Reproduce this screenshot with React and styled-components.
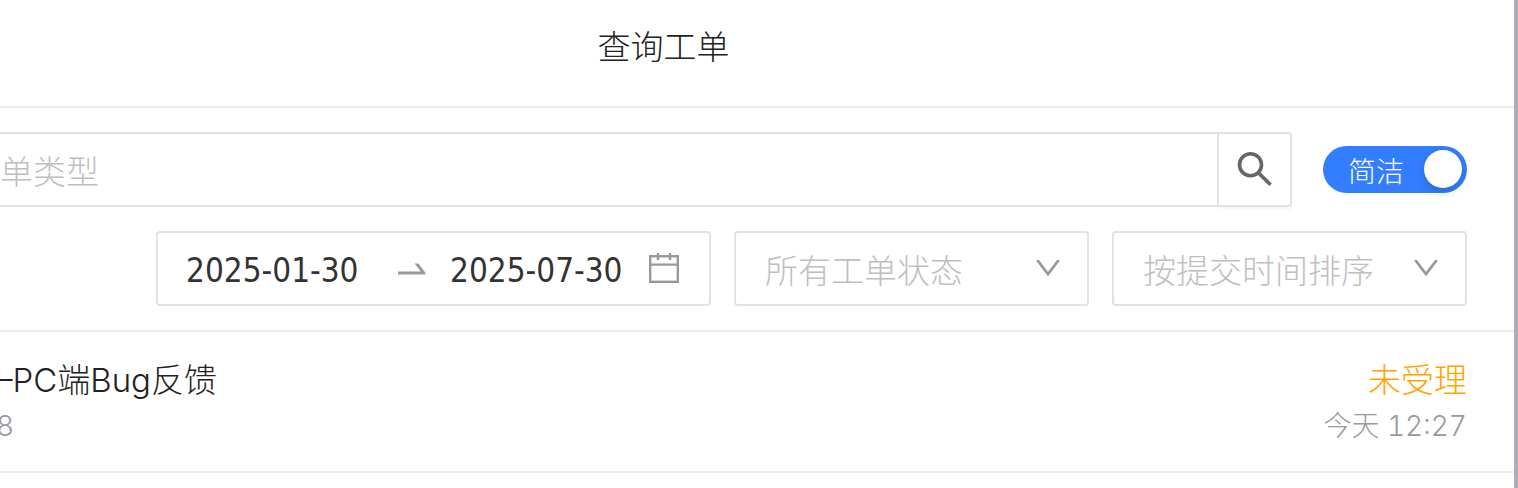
import React, { useState } from 'react';
import styled, { createGlobalStyle } from 'styled-components';

const GlobalStyle = createGlobalStyle`
    * {
        box-sizing: border-box;
    }
    body {
        margin: 0;
        background-color: white;
        font-family: Inter, "Noto Sans CJK SC", sans-serif;
        font-weight: 300;
        color: #222;
    }
    input, select, button {
        margin: 0;
        font: inherit;
        color: inherit;
    }
`;

const tickets = [
    { id: 1, title: '–PC端Bug反馈', code: '8', status: '未受理', time: '今天 12:27' },
];

const SearchIcon = () => (
    <svg width="36" height="36" viewBox="0 0 36 36" fill="none" stroke="#666" strokeWidth="3.6">
        <circle cx="13.5" cy="12.8" r="11" />
        <path d="M21.2 20.6L33.6 32.8" />
    </svg>
);

const ArrowIcon = () => (
    <svg width="28" height="32" viewBox="0 0 28 32" fill="#999">
        <path d="M0 18.4H22.6L16.6 10.4H20.4L27.2 19.4Q28.2 21.4 26.4 21.4H0Z" />
    </svg>
);

const CalendarIcon = () => (
    <svg width="30" height="34" viewBox="0 0 30 34" fill="none" stroke="#999" strokeWidth="2.4">
        <rect x="1.2" y="4.2" width="27.6" height="25.6" />
        <path d="M1 12.6H29M9 1V8M21 1V8" />
    </svg>
);

const ChevronIcon = () => (
    <svg width="24" height="16" viewBox="0 0 24 16" fill="none" stroke="#999" strokeWidth="2.8">
        <path d="M1.2 0L12 14L22.8 0" />
    </svg>
);

const Dropdown = ({ label, options }) => (
    <SelectBox>
        <Select aria-label={label} defaultValue={options[0]}>
            {options.map((option) => <option key={option}>{option}</option>)}
        </Select>
        <SelectArrow><ChevronIcon /></SelectArrow>
    </SelectBox>
);

const App = () => {
    const [simple, setSimple] = useState(true);
    const [start, setStart] = useState('2025-01-30');
    const [end, setEnd] = useState('2025-07-30');

    return (
        <Page>
            <GlobalStyle />
            <Header>
                <Title>查询工单</Title>
            </Header>
            <Filters>
                <SearchRow>
                    <SearchBox>
                        <SearchInput type="text" placeholder="单类型" aria-label="工单类型" />
                        <SearchButton type="button" aria-label="搜索"><SearchIcon /></SearchButton>
                    </SearchBox>
                    <Switch $on={simple}>
                        <SwitchInput
                            type="checkbox"
                            role="switch"
                            checked={simple}
                            onChange={() => setSimple(!simple)}
                        />
                        <span>简洁</span>
                        <Thumb />
                    </Switch>
                </SearchRow>
                <FilterRow>
                    <DateRange>
                        <DateInput aria-label="开始日期" value={start} onChange={(e) => setStart(e.target.value)} />
                        <ArrowIcon />
                        <DateInput aria-label="结束日期" value={end} onChange={(e) => setEnd(e.target.value)} />
                        <CalendarIcon />
                    </DateRange>
                    <Dropdown label="工单状态" options={['所有工单状态']} />
                    <Dropdown label="排序" options={['按提交时间排序']} />
                </FilterRow>
            </Filters>
            <List>
                {tickets.map((ticket) => (
                    <Ticket key={ticket.id}>
                        <Line>
                            <span>{ticket.title}</span>
                            <Status>{ticket.status}</Status>
                        </Line>
                        <Line $small>
                            <span>{ticket.code}</span>
                            <span>{ticket.time}</span>
                        </Line>
                    </Ticket>
                ))}
            </List>
        </Page>
    );
};

const Page = styled.main`
    min-height: 100vh;
    border-right: 4px solid #adaeb3;
    overflow: hidden;
`;

const Header = styled.header`
    padding: 23px 187px 35px 0;
    border-bottom: 2px solid #ededed;
    text-align: center;
`;

const Title = styled.h1`
    margin: 0;
    font-size: 33px;
    line-height: 48px;
    font-weight: 300;
`;

const Filters = styled.section`
    display: flex;
    flex-direction: column;
    gap: 24px;
    padding: 24px 47px 24px 0;
    border-bottom: 2px solid #ededed;
`;

const SearchRow = styled.div`
    display: flex;
    align-items: center;
    gap: 31px;
`;

const SearchBox = styled.div`
    display: flex;
    flex: 1;
    height: 75px;
`;

const SearchInput = styled.input`
    flex: 1;
    min-width: 0;
    padding: 4px 0 0;
    border: solid #e1e1e6;
    border-width: 2px 0;
    outline: none;
    font-size: 33px;
    &::placeholder {
        color: #bfbfbf;
        opacity: 1;
    }
`;

const SearchButton = styled.button`
    display: flex;
    align-items: center;
    justify-content: center;
    width: 75px;
    padding: 0;
    border: 2px solid #e1e1e6;
    border-radius: 0 4px 4px 0;
    background-color: white;
    box-shadow: 0 4px 0 rgba(0, 0, 0, 0.02);
`;

const Switch = styled.label`
    display: flex;
    flex-direction: ${({ $on }) => ($on ? 'row' : 'row-reverse')};
    align-items: flex-start;
    justify-content: space-between;
    width: 144px;
    height: 47px;
    padding: ${({ $on }) => ($on ? '4px 5px 0 25px' : '4px 25px 0 5px')};
    border-radius: 24px;
    background-color: ${({ $on }) => ($on ? '#337eff' : '#bfbfbf')};
    color: white;
    font-size: 28px;
    line-height: 44px;
    cursor: pointer;
`;

const SwitchInput = styled.input`
    position: absolute;
    opacity: 0;
`;

const Thumb = styled.span`
    width: 38px;
    height: 38px;
    border-radius: 50%;
    background-color: white;
    box-shadow: 0 4px 8px rgba(0, 35, 11, 0.2);
`;

const FilterRow = styled.div`
    display: flex;
    justify-content: flex-end;
    gap: 23px;
`;

const DateRange = styled.div`
    display: flex;
    align-items: center;
    gap: 24px;
    height: 75px;
    padding: 0 30px 0 28px;
    border: 2px solid #e1e1e6;
    border-radius: 4px;
`;

const DateInput = styled.input`
    width: 188px;
    height: 100%;
    padding: 3px 0 0;
    border: none;
    outline: none;
    background: none;
    color: #333;
    font-family: "DejaVu Sans Condensed", "DejaVu Sans", sans-serif;
    font-size: 33px;
    font-weight: 400;
    &:last-of-type {
        width: 175px;
    }
`;

const SelectBox = styled.div`
    position: relative;
    width: 355px;
    height: 75px;
`;

const Select = styled.select`
    width: 100%;
    height: 100%;
    padding: 4px 60px 0 29px;
    border: 2px solid #e1e1e6;
    border-radius: 4px;
    appearance: none;
    background-color: white;
    color: #bfbfbf;
    font-size: 33px;
`;

const SelectArrow = styled.span`
    position: absolute;
    top: 29px;
    right: 29px;
    display: flex;
    pointer-events: none;
`;

const List = styled.ul`
    margin: 0;
    padding: 0;
    list-style: none;
`;

const Ticket = styled.li`
    margin-left: -4px;
    padding: 24px 47px 23px 0;
    border-bottom: 2px solid #ededed;
`;

const Line = styled.div`
    display: flex;
    justify-content: space-between;
    font-size: ${({ $small }) => ($small ? 28 : 33)}px;
    line-height: ${({ $small }) => ($small ? 44 : 48)}px;
    color: ${({ $small }) => ($small ? '#999' : '#222')};
    font-variant-numeric: tabular-nums;
`;

const Status = styled.span`
    color: #ffa500;
`;

export default App;
